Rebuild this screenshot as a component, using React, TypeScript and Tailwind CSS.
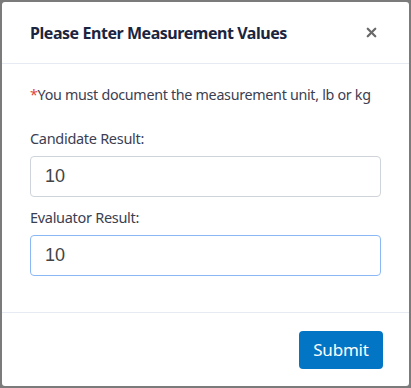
import { X } from 'lucide-react';

export default function App() {
  return (
    <div className="w-[411px] h-[388px] bg-[#7b7b7b] p-[2px] font-['Noto_Sans',sans-serif]">
      <div className="h-full flex flex-col bg-white rounded-[3px]">
        {/* Header */}
        <div className="h-[62px] flex items-center justify-between pl-[28px] pr-[30px] border-b border-[#e6ebf3]">
          <h2 className="text-[16px] font-bold text-[#1c2540] tracking-[-0.45px]">Please Enter Measurement Values</h2>
          <X className="w-[15px] h-[15px] text-[#6a6a6a]" strokeWidth={3.6} />
        </div>

        {/* Body */}
        <div className="flex-1 px-[28px] pt-[20px] text-[#3a4052]">
          <p className="text-[14.3px] tracking-[-0.3px] whitespace-nowrap mb-[23px]">
            <span className="text-[#e0443c]">*</span>You must document the measurement unit, lb or kg
          </p>
          <label className="block text-[14.5px] tracking-[-0.3px] mb-[6px]">Candidate Result:</label>
          <input
            defaultValue="10"
            className="w-[351px] h-[41px] px-[14px] rounded-[4px] border border-[#cfd4da] text-[18px] text-[#444] font-['Liberation_Sans',sans-serif] outline-none mb-[10px]"
          />
          <label className="block text-[14.5px] tracking-[-0.3px] mb-[6px]">Evaluator Result:</label>
          <input
            defaultValue="10"
            className="w-[351px] h-[41px] px-[14px] rounded-[4px] border border-[#8ab8f5] text-[18px] text-[#444] font-['Liberation_Sans',sans-serif] outline-none"
          />
        </div>

        {/* Footer */}
        <div className="h-[74px] flex items-center justify-end pr-[26px] border-t border-[#e6ebf3]">
          <button className="w-[84px] h-[38px] rounded-[4px] bg-[#0276c5] text-white text-[17px] tracking-[-0.2px]">Submit</button>
        </div>
      </div>
    </div>
  );
}
